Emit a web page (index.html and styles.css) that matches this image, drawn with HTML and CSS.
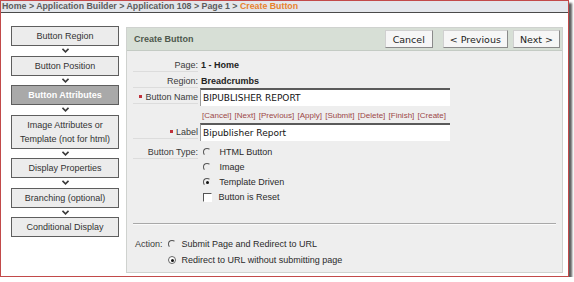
FILE: index.html
```html
<!DOCTYPE html>
<html lang="en">
<head>
  <meta charset="UTF-8">
  <title>Create Button</title>
  <link rel="stylesheet" href="styles.css">
</head>
<body>
  <div class="frame">
    <div class="crumbs">
      Home &gt; Application Builder &gt; Application 108 &gt; Page 1 &gt; <span class="current">Create Button</span>
    </div>

    <div class="main">
      <!-- wizard steps -->
      <div class="steps">
        <div class="step">Button Region</div>
        <div class="arrow"><svg width="7" height="5" viewBox="0 0 7 5"><path d="M0.5 0.8 L3.5 3.8 L6.5 0.8" fill="none" stroke="#3a3a3a" stroke-width="1.6"/></svg></div>
        <div class="step">Button Position</div>
        <div class="arrow"><svg width="7" height="5" viewBox="0 0 7 5"><path d="M0.5 0.8 L3.5 3.8 L6.5 0.8" fill="none" stroke="#3a3a3a" stroke-width="1.6"/></svg></div>
        <div class="step active">Button Attributes</div>
        <div class="arrow"><svg width="7" height="5" viewBox="0 0 7 5"><path d="M0.5 0.8 L3.5 3.8 L6.5 0.8" fill="none" stroke="#3a3a3a" stroke-width="1.6"/></svg></div>
        <div class="step tall">Image Attributes or<br>Template (not for html)</div>
        <div class="arrow"><svg width="7" height="5" viewBox="0 0 7 5"><path d="M0.5 0.8 L3.5 3.8 L6.5 0.8" fill="none" stroke="#3a3a3a" stroke-width="1.6"/></svg></div>
        <div class="step">Display Properties</div>
        <div class="arrow"><svg width="7" height="5" viewBox="0 0 7 5"><path d="M0.5 0.8 L3.5 3.8 L6.5 0.8" fill="none" stroke="#3a3a3a" stroke-width="1.6"/></svg></div>
        <div class="step">Branching (optional)</div>
        <div class="arrow"><svg width="7" height="5" viewBox="0 0 7 5"><path d="M0.5 0.8 L3.5 3.8 L6.5 0.8" fill="none" stroke="#3a3a3a" stroke-width="1.6"/></svg></div>
        <div class="step">Conditional Display</div>
      </div>

      <!-- form region -->
      <div class="panel">
        <div class="panel-head">
          <span class="title">Create Button</span>
          <div class="actions">
            <button class="btn cancel">Cancel</button>
            <button class="btn">&lt; Previous</button>
            <button class="btn">Next &gt;</button>
          </div>
        </div>

        <div class="panel-body">
          <div class="row r-page">
            <span class="lbl">Page:</span>
            <span class="val strong">1 - Home</span>
          </div>
          <div class="row r-region">
            <span class="lbl">Region:</span>
            <span class="val strong">Breadcrumbs</span>
          </div>
          <div class="row r-input">
            <span class="lbl"><span class="req"></span>Button Name</span>
            <input class="field" type="text" value="BIPUBLISHER REPORT">
          </div>
          <div class="row r-links">
            <span class="lbl blank"></span>
            <span class="links">[Cancel] [Next] [Previous] [Apply] [Submit] [Delete] [Finish] [Create]</span>
          </div>
          <div class="row r-input r-label">
            <span class="lbl"><span class="req"></span>Label</span>
            <input class="field" type="text" value="Bipublisher Report">
          </div>
          <div class="row r-type">
            <span class="lbl">Button Type:</span>
            <label class="opt"><input type="radio" name="btype"> HTML Button</label>
          </div>
          <div class="row r-opt">
            <span class="lbl blank"></span>
            <label class="opt"><input type="radio" name="btype"> Image</label>
          </div>
          <div class="row r-opt">
            <span class="lbl blank"></span>
            <label class="opt"><input type="radio" name="btype" checked> Template Driven</label>
          </div>
          <div class="row r-opt">
            <span class="lbl blank"></span>
            <label class="opt chk"><input type="checkbox"> Button is Reset</label>
          </div>

          <hr class="sep">

          <div class="action">
            <span class="act-lbl">Action:</span>
            <div class="act-opts">
              <label class="opt"><input type="radio" name="act"> Submit Page and Redirect to URL</label>
              <label class="opt"><input type="radio" name="act" class="ring" checked> Redirect to URL without submitting page</label>
            </div>
          </div>
        </div>
      </div>
    </div>
  </div>
</body>
</html>
```

FILE: styles.css
```css
* {
  margin: 0;
  padding: 0;
  box-sizing: border-box;
}

body {
  background: #ffffff;
  font-family: "Liberation Sans", Arial, sans-serif;
  font-size: 9px;
  color: #333;
}

.frame {
  width: 569px;
  height: 277px;
  border: 1px solid #c24a4a;
  background: #fff;
  box-shadow: 3px 3px 2px rgba(40, 40, 40, 0.75);
}

.crumbs {
  height: 12px;
  line-height: 11px;
  padding-left: 1px;
  background: #e3e6eb;
  border-bottom: 1px solid #4a4a4a;
  font-weight: bold;
  font-size: 8.8px;
  color: #5c5c5c;
  white-space: nowrap;
}

.crumbs .current {
  color: #e8822e;
}

.main {
  display: flex;
  padding: 13px 0 0 10px;
}

/* wizard steps */
.steps {
  width: 108px;
  display: flex;
  flex-direction: column;
}

.step {
  height: 20px;
  line-height: 18px;
  border: 1px solid #5e5e5e;
  background: #ececec;
  text-align: center;
  color: #333;
}

.step.tall {
  height: 34px;
  line-height: 14px;
  padding-top: 2px;
}

.step.active {
  background: #a9a9a9;
  color: #fff;
  font-weight: bold;
}

.arrow {
  height: 9.5px;
  display: flex;
  align-items: center;
  justify-content: center;
}

.arrow svg {
  display: block;
}

/* panel */
.panel {
  margin-left: 7px;
  margin-top: 1px;
  width: 437px;
  height: 246px;
  border: 1px solid #cfd2cf;
  background: #eeeeee;
}

.panel-head {
  height: 23px;
  display: flex;
  align-items: center;
  justify-content: space-between;
  background: #d7dfd6;
  border-bottom: 1px solid #c4cbc4;
  padding: 0 2px 0 7px;
}

.title {
  font-weight: bold;
  color: #4d584d;
}

.actions {
  display: flex;
  gap: 5px;
}

.btn {
  height: 18px;
  padding: 0 6px;
  background: #f6f6f6;
  border: 1px solid #d0d0d0;
  border-right-color: #8a8a8a;
  border-bottom-color: #8a8a8a;
  font-family: "DejaVu Sans", sans-serif;
  font-size: 9.5px;
  color: #222;
}

.btn.cancel {
  width: 48px;
  margin-right: 5px;
}

.panel-body {
  padding: 0 6px 0 6px;
}

.row {
  display: flex;
  align-items: center;
  height: 14px;
  margin-top: 1px;
}

.r-page { margin-top: 7px; }
.r-region { margin-top: 2px; }
.r-input { height: 18px; margin-top: 0; }
.r-links { height: 12px; margin-top: 3px; }
.r-label { margin-top: 2px; }
.r-type { margin-top: 4px; }

.lbl {
  width: 65px;
  flex: none;
  text-align: right;
  color: #3a3a3a;
  border-bottom: 1px solid #dcdcdc;
  line-height: 12px;
  white-space: nowrap;
}

.lbl.blank {
  border-bottom: none;
}

.req {
  display: inline-block;
  width: 3px;
  height: 3px;
  background: #c0303a;
  margin-right: 3px;
  vertical-align: 2px;
}

.val {
  margin-left: 3px;
}

.strong {
  font-weight: bold;
  color: #222;
}

.field {
  margin-left: 2px;
  width: 250px;
  height: 18px;
  border: none;
  border-top: 2px solid #5a5a5a;
  border-left: 1px solid #9a9a9a;
  background: #fff;
  padding: 0 2px;
  font-family: "DejaVu Sans", sans-serif;
  font-size: 9px;
  color: #111;
  outline: none;
}

.links {
  margin-left: 4px;
  font-size: 8px;
  color: #9c4848;
  word-spacing: 1px;
  white-space: nowrap;
}

.opt {
  display: flex;
  align-items: center;
  margin-left: 5px;
  color: #2a2a2a;
  white-space: pre;
}

.opt input {
  appearance: none;
  -webkit-appearance: none;
  width: 8px;
  height: 8px;
  margin-right: 6px;
  border-radius: 50%;
  border: 1px solid;
  border-color: #555 #eee #eee #555;
  background: #eee;
  position: relative;
}

.opt input:checked::after {
  content: "";
  position: absolute;
  left: 1.5px;
  top: 1.5px;
  width: 3px;
  height: 3px;
  border-radius: 50%;
  background: #111;
}

.opt.chk input {
  border-radius: 0;
  width: 9px;
  height: 9px;
  border-color: #555 #fff #fff #555;
  background: #fff;
  margin-right: 4px;
}

.sep {
  border: none;
  border-top: 1px solid #a8a8a8;
  border-bottom: 1px solid #fafafa;
  margin: 19px 0 0 0;
}

.action {
  display: flex;
  margin-top: 12px;
  padding-left: 2px;
}

.act-lbl {
  width: 32px;
  line-height: 14px;
  color: #3a3a3a;
}

.act-opts {
  display: flex;
  flex-direction: column;
  gap: 2px;
}

.act-opts .opt {
  height: 14px;
  margin-left: 1px;
}

.act-opts .opt input {
  margin-right: 3px;
}

.act-opts .opt input.ring {
  border-color: #666;
  background: #fff;
}
```
